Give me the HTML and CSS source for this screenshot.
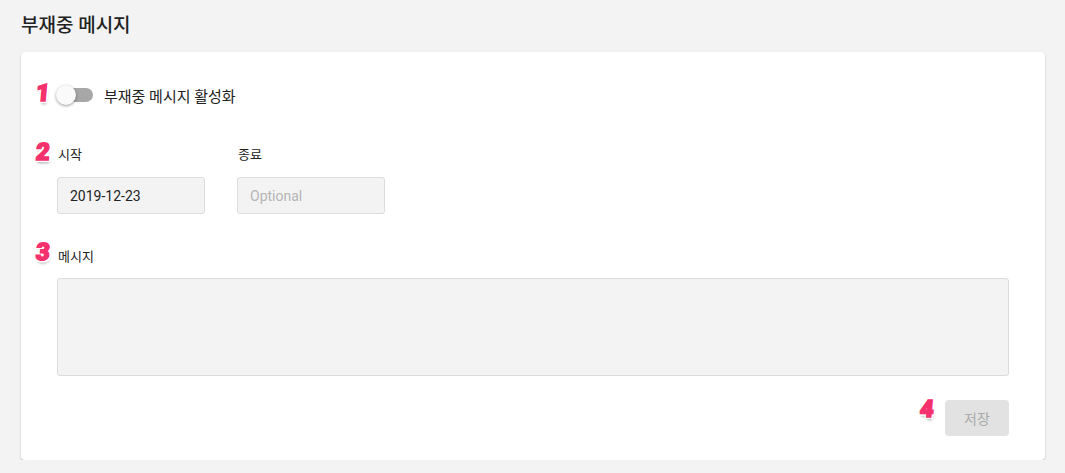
FILE: index.html
```html
<!DOCTYPE html>
<html lang="ko">
<head>
    <meta charset="utf-8">
    <meta name="viewport" content="width=device-width, initial-scale=1">
    <title>부재중 메시지</title>
    <link rel="stylesheet" href="styles.css">
</head>
<body>
    <div class="page">
        <h1 class="title">부재중 메시지</h1>

        <div class="card">
            <span class="mark mark-1">1</span>
            <span class="mark mark-2">2</span>
            <span class="mark mark-3">3</span>
            <span class="mark mark-4">4</span>

            <div class="toggle-row">
                <span class="switch"><span class="knob"></span></span>
                <span class="toggle-label">부재중 메시지 활성화</span>
            </div>

            <div class="dates">
                <div class="field">
                    <label class="field-label">시작</label>
                    <input class="input" type="text" value="2019-12-23">
                </div>
                <div class="field">
                    <label class="field-label">종료</label>
                    <input class="input" type="text" placeholder="Optional">
                </div>
            </div>

            <label class="field-label msg-label">메시지</label>
            <textarea class="textarea"></textarea>

            <div class="actions">
                <button class="save" disabled>저장</button>
            </div>
        </div>
    </div>
</body>
</html>
```

FILE: styles.css
```css
body{
    margin:0;
    background:#f3f3f3;
    font-family:Roboto, "Noto Sans CJK KR", sans-serif;
    color:#222;
}
.page{
    padding:14px 20px 0 21px;
}
.title{
    margin:0 0 14px;
    font-size:19px;
    line-height:24px;
    font-weight:500;
    color:#222;
}
.card{
    position:relative;
    background:#fff;
    border-radius:4px;
    box-shadow:0 1px 2px rgba(0,0,0,0.25);
    padding:28px 36px 24px;
}

/* numbered annotations */
.mark{
    position:absolute;
    font:900 24px/1 Roboto, sans-serif;
    transform:skewX(-5deg);
    color:#f4306d;
    -webkit-text-stroke:1.5px #f4306d;
    text-shadow:
        2px 0 0 #fff, -2px 0 0 #fff, 0 2px 0 #fff, 0 -2px 0 #fff,
        2px 2px 0 #fff, -2px -2px 0 #fff, 2px -2px 0 #fff, -2px 2px 0 #fff,
        1px 3px 3px rgba(0,0,0,0.35);
}
.mark-1{ left:15px; top:29px; }
.mark-2{ left:15px; top:88px; }
.mark-3{ left:15px; top:188px; }
.mark-4{ left:899px; top:345px; }

.toggle-row{
    display:flex;
    align-items:center;
    height:30px;
}
.switch{
    position:relative;
    display:inline-block;
    width:35px;
    height:14px;
    margin-left:1px;
    border-radius:7px;
    background:#a7a7a7;
}
.knob{
    position:absolute;
    left:-2px;
    top:-3px;
    width:20px;
    height:20px;
    border-radius:50%;
    background:#fafafa;
    box-shadow:0 1px 3px rgba(0,0,0,0.4);
}
.toggle-label{
    margin-left:11px;
    font-size:15px;
    color:#222;
}

.dates{
    display:flex;
    gap:32px;
    margin-top:35px;
}
.field{
    display:flex;
    flex-direction:column;
}
.field-label{
    display:block;
    font-size:13px;
    line-height:20px;
    margin:0 0 12px 1px;
    color:#222;
}
.input{
    box-sizing:border-box;
    width:148px;
    height:37px;
    padding:0 12px;
    border:1px solid #dcdcdc;
    border-radius:3px;
    background:#f3f3f3;
    font:14px Roboto, sans-serif;
    color:#222;
}
.input::placeholder{
    color:#b5b5b5;
}
.msg-label{
    margin-top:33px;
    margin-bottom:11px;
}
.textarea{
    display:block;
    box-sizing:border-box;
    width:100%;
    height:98px;
    border:1px solid #dcdcdc;
    border-radius:3px;
    background:#f3f3f3;
    resize:none;
}
.actions{
    display:flex;
    justify-content:flex-end;
    margin-top:24px;
}
.save{
    width:64px;
    height:36px;
    border:0;
    border-radius:4px;
    background:#e2e2e2;
    color:#a9a9a9;
    font:14px Roboto, "Noto Sans CJK KR", sans-serif;
}
```
